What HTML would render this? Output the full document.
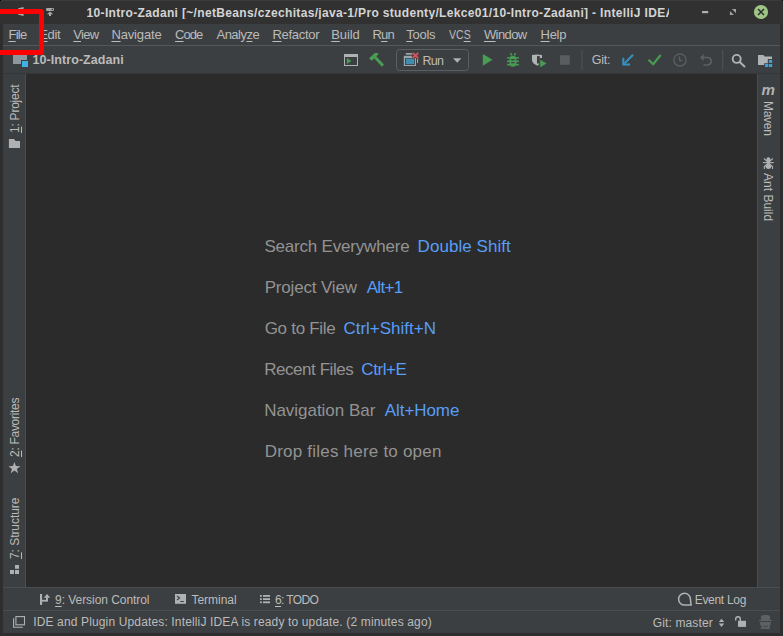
<!DOCTYPE html>
<html><head><meta charset="utf-8"><style>
*{margin:0;padding:0;box-sizing:border-box}
html,body{width:783px;height:636px;overflow:hidden;background:#2e2e2e;font-family:"Liberation Sans",sans-serif;color:#bbbbbb}
.a{position:absolute;white-space:pre;line-height:1}
.p{position:absolute}
u{text-decoration:underline;text-underline-offset:2px;text-decoration-thickness:1px}
svg{position:absolute;left:0;top:0}
</style></head><body>

<div class="p" style="left:0;top:0;width:783px;height:24px;background:#313131"></div>
<div class="p" style="left:0;top:0;width:783px;height:1px;background:#3b3b3b"></div>
<div class="p" style="left:0;top:0;width:1px;height:1px;background:#000"></div>
<div class="p" style="left:782px;top:0;width:1px;height:1px;background:#000"></div>
<div class="p" style="left:3px;top:24px;width:777px;height:21px;background:#3c3f41"></div>
<div class="p" style="left:3px;top:45px;width:777px;height:1px;background:#545759"></div>
<div class="p" style="left:3px;top:46px;width:777px;height:28px;background:#3c3f41"></div>
<div class="p" style="left:3px;top:73px;width:777px;height:1px;background:#343638"></div>
<div class="p" style="left:3px;top:74px;width:22px;height:513px;background:#3c3f41"></div>
<div class="p" style="left:25px;top:74px;width:1px;height:513px;background:#4b4e50"></div>
<div class="p" style="left:26px;top:74px;width:731px;height:513px;background:#2b2b2b"></div>
<div class="p" style="left:757px;top:74px;width:1px;height:513px;background:#4b4e50"></div>
<div class="p" style="left:758px;top:74px;width:22px;height:513px;background:#3c3f41"></div>
<div class="p" style="left:3px;top:587px;width:777px;height:1px;background:#4b4e50"></div>
<div class="p" style="left:3px;top:588px;width:777px;height:22px;background:#3c3f41"></div>
<div class="p" style="left:3px;top:610px;width:777px;height:1px;background:#4b4e50"></div>
<div class="p" style="left:3px;top:611px;width:777px;height:22px;background:#3c3f41"></div>

<svg width="783" height="636" viewBox="0 0 783 636">
 <!-- title bar -->
 <g fill="#a8a8a8">
  <path d="M18.2 9.5 V8.3 L23.6 7 V9.5 Z M18.2 14 H23.6 V16.1 L18.2 14.8 Z"/>
  <rect x="46" y="8" width="8" height="3" rx="1.2"/>
  <path d="M50 11.5 L46.8 14.2 H49 V16 H51 V14.2 H53.2 Z"/>
 </g>
 <circle cx="52.3" cy="9.5" r="0.8" fill="#313131"/>
 <rect x="702" y="11" width="6.2" height="2.2" fill="#b0b0b0"/>
 <path d="M731.9 9.1 H736 V13.2 Z M729.9 10.9 V15 H734 Z" fill="#a0a0a0"/>
 <circle cx="761" cy="12" r="7.1" fill="#9dc584"/>
 <path d="M758 9 L764 15 M764 9 L758 15" stroke="#2e2e2e" stroke-width="1.5"/>

 <!-- nav bar: project icon -->
 <rect x="13" y="55" width="14" height="9" fill="#8e979e"/>
 <rect x="21" y="60" width="8" height="8" fill="#3c3f41"/>
 <rect x="22" y="61" width="6" height="6" fill="#3db2e3"/>

 <!-- window run icon -->
 <rect x="344.5" y="54.5" width="13" height="11" fill="none" stroke="#afb1b3" stroke-width="1"/>
 <rect x="344" y="54" width="14" height="3" fill="#afb1b3"/>
 <path d="M346.8 57.8 L351.4 60.9 L346.8 64 Z" fill="#499c54"/>
 <!-- hammer -->
 <path d="M369.05 58.3 L374.8 53.07 L378.19 53.07 L378.19 54.34 L376.4 56.4 L384.0 64.6 L382.0 66.7 L374.3 58.6 L371.6 60.86 Z" fill="#499c54"/>

 <!-- run config combo -->
 <rect x="396.5" y="49.5" width="72" height="21" rx="3" fill="none" stroke="#5b5f61" stroke-width="1"/>
 <rect x="405.8" y="53" width="12.3" height="1.7" fill="#9aa5ab"/>
 <rect x="417" y="53" width="1.1" height="10" fill="#9aa5ab"/>
 <rect x="403.8" y="55.8" width="12.2" height="10.2" fill="#9aa5ab"/>
 <rect x="405" y="58.2" width="9.9" height="6.8" fill="#3c3f41"/>
 <rect x="405.8" y="58.8" width="8.4" height="5.4" fill="#3f8db0"/>
 <path d="M412.6 52.8 L418.2 58.2 M418.2 52.8 L412.6 58.2" stroke="#3c3f41" stroke-width="3.2"/>
 <path d="M412.6 52.8 L418.2 58.2 M418.2 52.8 L412.6 58.2" stroke="#e0525a" stroke-width="1.7"/>
 <path d="M453 58.2 H461.4 L457.2 62.7 Z" fill="#afb1b3"/>

 <!-- run / debug / coverage / stop -->
 <path d="M482.8 53.9 L492.5 59.85 L482.8 65.8 Z" fill="#499c54"/>
 <g fill="#499c54">
  <rect x="509.6" y="55.7" width="6.6" height="11" rx="3.3"/>
  <rect x="507.1" y="57.1" width="11.8" height="1.5"/>
  <rect x="507.1" y="60.5" width="11.8" height="1.6"/>
  <rect x="507.1" y="63.8" width="11.8" height="1.6"/>
 </g>
 <path d="M510.4 53.1 L511.8 55.3 M515.6 53.1 L514.2 55.3" stroke="#499c54" stroke-width="1.5"/>
 <rect x="511.2" y="59.1" width="3.4" height="1.3" fill="#3c3f41"/>
 <rect x="511.2" y="62.1" width="3.4" height="1.2" fill="#3c3f41"/>
 <path d="M532 55 Q537 53.8 542 55 V58 H539.8 V63.5 L537.5 65.7 Q532 63.5 532 60 Z" fill="#afb1b3"/>
 <rect x="537" y="56.1" width="2.8" height="7.4" fill="#3c3f41"/>
 <path d="M539.8 59 L547.1 63.5 L539.8 68.1 Z" fill="#499c54" stroke="#3c3f41" stroke-width="0.8"/>
 <rect x="560" y="55.3" width="9.8" height="9.5" fill="#5a5d5f"/>
 <rect x="581.5" y="50" width="1" height="19.6" fill="#515456"/>

 <!-- git icons -->
 <path d="M633.1 54.7 L624.5 63.4" stroke="#3592c4" stroke-width="2"/>
 <path d="M623.3 57.8 V64.6 H630.1" fill="none" stroke="#3592c4" stroke-width="2"/>
 <path d="M648.5 59.8 L653.2 64.2 L660.6 55" fill="none" stroke="#499c54" stroke-width="2.2"/>
 <circle cx="680" cy="59.9" r="6.1" fill="none" stroke="#5d5f61" stroke-width="1.3"/>
 <path d="M679.5 56.5 V60.5 H682.5" fill="none" stroke="#5d5f61" stroke-width="1.3"/>
 <path d="M701 57.5 H708 A3.8 3.8 0 0 1 708 65 H703.5" fill="none" stroke="#5d5f61" stroke-width="1.6"/>
 <path d="M700.2 57.5 L703.6 54 L703.6 61 Z" fill="#5d5f61"/>
 <rect x="722.2" y="50" width="1" height="19.6" fill="#515456"/>
 <!-- search -->
 <circle cx="736.7" cy="58.9" r="4" fill="none" stroke="#afb1b3" stroke-width="1.9"/>
 <path d="M739.5 61.8 L745 67" stroke="#afb1b3" stroke-width="2"/>
 <!-- project structure -->
 <path d="M758 55 H763.5 L764.5 56.5 H772 V59 H767.8 V63.2 H764.2 V65 H758 Z" fill="#afb1b3"/>
 <rect x="768.9" y="59.9" width="3.3" height="3" fill="#3aa0d8"/>
 <rect x="765.1" y="64" width="3.1" height="3" fill="#3aa0d8"/>
 <rect x="768.9" y="64" width="3.3" height="3" fill="#3aa0d8"/>

 <!-- left stripe -->
 <path d="M8.9 139 H14.1 L15.5 141 H20 V148 H8.9 Z" fill="#afb1b3"/>
 <path d="M14.4 462 L15.9 466.1 L20.3 466.2 L16.8 468.9 L18.1 473.2 L14.4 470.6 L10.7 473.2 L12 468.9 L8.5 466.2 L12.9 466.1 Z" fill="#afb1b3"/>
 <rect x="15" y="565" width="4" height="3.8" fill="#afb1b3"/>
 <rect x="10" y="570" width="4" height="4" fill="#afb1b3"/>
 <rect x="15" y="570" width="4" height="4" fill="#afb1b3"/>

 <!-- right stripe -->
 <text x="761.5" y="94.6" font-family="Liberation Sans" font-weight="bold" font-style="italic" font-size="15" fill="#afb1b3" textLength="13.5" lengthAdjust="spacingAndGlyphs">m</text>
 <g fill="#afb1b3">
  <ellipse cx="768.4" cy="159.6" rx="2" ry="2.4"/>
  <ellipse cx="768.4" cy="166.6" rx="2.8" ry="2.3"/>
  <rect x="767" y="161.5" width="2.8" height="3"/>
 </g>
 <g stroke="#afb1b3" stroke-width="1.1" fill="none">
  <path d="M764 158.5 L768.4 162.5 L772.8 158.5"/>
  <path d="M763 162.6 H773.8"/>
  <path d="M764.3 168.9 V166.5 L768.4 163 L772.5 166.5 V168.9"/>
 </g>

 <!-- bottom stripe -->
 <rect x="40" y="594" width="2.1" height="10.9" fill="#afb1b3"/>
 <rect x="42" y="599.8" width="5.9" height="1.8" fill="#afb1b3"/>
 <rect x="46" y="597" width="1.9" height="4" fill="#afb1b3"/>
 <path d="M43.8 597.8 L47 594 L50.3 597.8 Z" fill="#afb1b3"/>
 <rect x="175" y="594" width="11" height="9.8" fill="#afb1b3"/>
 <path d="M177 596 L179.6 598 L177 600" fill="none" stroke="#3c3f41" stroke-width="1.1"/>
 <rect x="180.3" y="601" width="3.5" height="1" fill="#3c3f41"/>
 <g fill="#afb1b3">
  <rect x="260" y="595" width="1.8" height="1.8"/><rect x="263" y="595" width="7" height="1.8"/>
  <rect x="260" y="598.2" width="1.8" height="1.8"/><rect x="263" y="598.2" width="7" height="1.8"/>
  <rect x="260" y="601.4" width="1.8" height="1.8"/><rect x="263" y="601.4" width="7" height="1.8"/>
 </g>
 <path d="M691.1 605.1 H684.6 A5.9 5.9 0 1 1 690.4 599.2 Z" fill="none" stroke="#afb1b3" stroke-width="1.5"/>

 <!-- status bar -->
 <rect x="15.9" y="616.6" width="8.6" height="8.2" fill="none" stroke="#afb1b3" stroke-width="1.1"/>
 <path d="M13.6 618.3 V627.2 H22.8" fill="none" stroke="#afb1b3" stroke-width="1.1"/>
 <path d="M718.8 622 L721.5 618.7 L724.2 622 Z M718.8 623.5 L724.2 623.5 L721.5 626.9 Z" fill="#afb1b3"/>
 <rect x="738" y="620.8" width="8" height="6.1" fill="#afb1b3"/>
 <path d="M735.7 620.5 V619 A2.3 2.3 0 0 1 740.3 619 V621" fill="none" stroke="#afb1b3" stroke-width="1.4"/>
 <g fill="#5e5f60">
  <path d="M761 620 V617 C761 615.4 762 615 765.5 615 C769 615 770 615.4 770 617 V620 Z"/>
  <rect x="759" y="620" width="13" height="1.1"/>
  <path d="M759.9 621.9 H770.8 V624.5 L769.7 626 V627.7 H770 V629 H760.7 V627.7 H761.5 V626 L759.9 624.5 Z"/>
 </g>
 <path d="M763.3 626.2 Q765.5 627.6 767.7 626.2" fill="none" stroke="#3c3f41" stroke-width="0.8"/>
</svg>
<div class="a" style="left:86.6px;top:7.0px;width:582.4px;overflow:hidden;font-size:12px;font-weight:bold;letter-spacing:0.334px;color:#d4d4d4">10-Intro-Zadani [~/netBeans/czechitas/java-1/Pro studenty/Lekce01/10-Intro-Zadani] - IntelliJ IDEA</div>
<div class="a" style="left:8.5px;top:27.8px;font-size:13px;letter-spacing:-0.733px;color:#bbbbbb;"><u>F</u>ile</div>
<div class="a" style="left:39.2px;top:27.8px;font-size:13px;letter-spacing:-0.3px;color:#bbbbbb;"><u>E</u>dit</div>
<div class="a" style="left:73.3px;top:27.8px;font-size:13px;letter-spacing:-0.733px;color:#bbbbbb;"><u>V</u>iew</div>
<div class="a" style="left:111.4px;top:27.8px;font-size:13px;letter-spacing:-0.143px;color:#bbbbbb;"><u>N</u>avigate</div>
<div class="a" style="left:175.1px;top:27.8px;font-size:13px;letter-spacing:-0.967px;color:#bbbbbb;"><u>C</u>ode</div>
<div class="a" style="left:216.5px;top:27.8px;font-size:13px;letter-spacing:-0.517px;color:#bbbbbb;">Analy<u>z</u>e</div>
<div class="a" style="left:272.4px;top:27.8px;font-size:13px;letter-spacing:-0.286px;color:#bbbbbb;"><u>R</u>efactor</div>
<div class="a" style="left:331.2px;top:27.8px;font-size:13px;letter-spacing:-0.1px;color:#bbbbbb;"><u>B</u>uild</div>
<div class="a" style="left:372.4px;top:27.8px;font-size:13px;letter-spacing:-0.75px;color:#bbbbbb;">R<u>u</u>n</div>
<div class="a" style="left:406.3px;top:27.8px;font-size:13px;letter-spacing:-0.275px;color:#bbbbbb;"><u>T</u>ools</div>
<div class="a" style="left:448.6px;top:27.8px;font-size:13px;color:#bbbbbb;transform:scaleX(0.81);transform-origin:0 0">VC<u>S</u></div>
<div class="a" style="left:483.9px;top:27.8px;font-size:13px;letter-spacing:-0.58px;color:#bbbbbb;"><u>W</u>indow</div>
<div class="a" style="left:540.5px;top:27.8px;font-size:13px;letter-spacing:-0.267px;color:#bbbbbb;"><u>H</u>elp</div>
<div class="a" style="left:32.6px;top:54.0px;font-size:12.5px;font-weight:bold;letter-spacing:0.057px;color:#bbbbbb;">10-Intro-Zadani</div>
<div class="a" style="left:422.5px;top:54.8px;font-size:12.5px;letter-spacing:-0.75px;color:#bbbbbb;">Run</div>
<div class="a" style="left:591.8px;top:54.0px;font-size:12.5px;letter-spacing:-0.267px;color:#bbbbbb;">Git:</div>
<div class="a" style="left:264.4px;top:237.8px;font-size:17px;letter-spacing:-0.194px;color:#939393;">Search Everywhere</div>
<div class="a" style="left:264.7px;top:278.5px;font-size:17px;letter-spacing:-0.173px;color:#939393;">Project View</div>
<div class="a" style="left:264.7px;top:319.8px;font-size:17px;letter-spacing:-0.289px;color:#939393;">Go to File</div>
<div class="a" style="left:264.2px;top:361.1px;font-size:17px;letter-spacing:-0.445px;color:#939393;">Recent Files</div>
<div class="a" style="left:264.2px;top:401.8px;font-size:17px;letter-spacing:-0.031px;color:#939393;">Navigation Bar</div>
<div class="a" style="left:264.7px;top:442.6px;font-size:17px;letter-spacing:0.214px;color:#939393;">Drop files here to open</div>
<div class="a" style="left:417.6px;top:237.8px;font-size:17px;letter-spacing:0.055px;color:#589df6;">Double Shift</div>
<div class="a" style="left:366.7px;top:278.5px;font-size:17px;letter-spacing:-0.7px;color:#589df6;">Alt+1</div>
<div class="a" style="left:343.4px;top:319.8px;font-size:17px;letter-spacing:0.0px;color:#589df6;">Ctrl+Shift+N</div>
<div class="a" style="left:361.3px;top:361.1px;font-size:17px;letter-spacing:-0.42px;color:#589df6;">Ctrl+E</div>
<div class="a" style="left:384.8px;top:401.8px;font-size:17px;letter-spacing:-0.071px;color:#589df6;">Alt+Home</div>
<div class="a" style="left:55.1px;top:593.7px;font-size:12px;letter-spacing:-0.059px;color:#bbbbbb;"><u>9</u>: Version Control</div>
<div class="a" style="left:191.5px;top:593.7px;font-size:12px;letter-spacing:-0.029px;color:#bbbbbb;">Terminal</div>
<div class="a" style="left:275.0px;top:593.7px;font-size:12px;letter-spacing:-0.633px;color:#bbbbbb;"><u>6</u>: TODO</div>
<div class="a" style="left:694.7px;top:593.7px;font-size:12px;letter-spacing:-0.3px;color:#bbbbbb;">Event Log</div>
<div class="a" style="left:33.2px;top:615.8px;font-size:12px;letter-spacing:0.143px;color:#bbbbbb;">IDE and Plugin Updates: IntelliJ IDEA is ready to update. (2 minutes ago)</div>
<div class="a" style="left:652.8px;top:617.4px;font-size:12px;letter-spacing:0.12px;color:#bbbbbb;">Git: master</div>
<div class="a" style="left:8.8px;top:133.0px;font-size:12px;letter-spacing:-0.244px;color:#bbbbbb;transform:rotate(-90deg);transform-origin:0 0"><u>1</u>: Project</div>
<div class="a" style="left:8.8px;top:456.6px;font-size:12px;letter-spacing:-0.291px;color:#bbbbbb;transform:rotate(-90deg);transform-origin:0 0"><u>2</u>: Favorites</div>
<div class="a" style="left:8.8px;top:558.9px;font-size:12px;letter-spacing:-0.055px;color:#bbbbbb;transform:rotate(-90deg);transform-origin:0 0"><u>7</u>: Structure</div>
<div class="a" style="left:774.4px;top:100.9px;font-size:12px;letter-spacing:-0.275px;color:#bbbbbb;transform:rotate(90deg);transform-origin:0 0">Maven</div>
<div class="a" style="left:774.4px;top:173.3px;font-size:12px;letter-spacing:0.012px;color:#bbbbbb;transform:rotate(90deg);transform-origin:0 0">Ant Build</div>
<div class="p" style="left:-5px;top:9px;width:49px;height:45.5px;border:5px solid #ff0000;border-radius:3px"></div>
</body></html>
